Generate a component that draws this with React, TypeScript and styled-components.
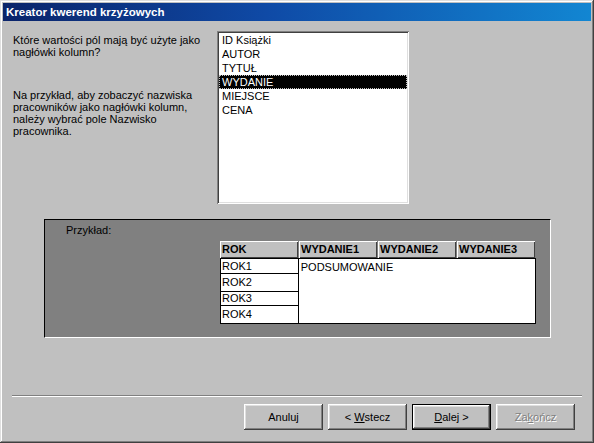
import styled, { createGlobalStyle } from "styled-components";

const GlobalStyle = createGlobalStyle`
  body {
    margin: 0;
    background: #c0c0c0;
    font-family: "Liberation Sans", Arial, sans-serif;
    font-size: 11px;
    color: #000;
  }
`;

const Window = styled.div`
  width: 594px;
  height: 443px;
  box-sizing: border-box;
  padding: 3px;
  background: #c0c0c0;
  box-shadow: inset -1px -1px #404040, inset 1px 1px #dfdfdf,
    inset -2px -2px #808080, inset 2px 2px #fff;
  display: flex;
  flex-direction: column;
`;

const TitleBar = styled.div`
  height: 18px;
  line-height: 18px;
  padding-left: 3px;
  background: linear-gradient(90deg, #0a246a 0%, #0f4aa6 45%, #1286d2 100%);
  color: #fff;
  font-weight: bold;
  font-size: 11.5px;
`;

const TopRow = styled.div`
  display: flex;
  align-items: flex-start;
  margin: 10px 0 0 10px;
`;

const Prompt = styled.div`
  width: 204px;
  padding-top: 3px;
  line-height: 12px;
`;

const Para = styled.p<{ $gap?: number }>`
  margin: ${(p) => p.$gap ?? 0}px 0 0 0;
`;

const ListBox = styled.div`
  width: 192px;
  height: 173px;
  box-sizing: border-box;
  padding: 2px;
  background: #fff;
  box-shadow: inset 1px 1px #808080, inset -1px -1px #fff,
    inset 2px 2px #404040, inset -2px -2px #dfdfdf;
`;

const ListItem = styled.div<{ $selected?: boolean }>`
  height: 14px;
  line-height: 14px;
  padding-left: 3px;
  white-space: nowrap;
  background: ${(p) => (p.$selected ? "#000" : "transparent")};
  color: ${(p) => (p.$selected ? "#fff" : "#000")};
  outline: ${(p) => (p.$selected ? "1px dotted #c0c0c0" : "none")};
  outline-offset: -1px;
`;

const ExamplePanel = styled.div`
  width: 507px;
  height: 119px;
  box-sizing: border-box;
  margin: 15px 0 0 41px;
  padding: 4px 0 0 21px;
  background: #808080;
  border: 1px solid;
  border-color: #000 #fff #fff #000;
`;

const PanelLabel = styled.div`
  line-height: 12px;
`;

const Grid = styled.div`
  margin: 5px 0 0 154px;
  width: 316px;
`;

const HeaderRow = styled.div`
  display: flex;
  gap: 1px;
`;

const HeaderCell = styled.div`
  width: 78px;
  height: 17px;
  box-sizing: border-box;
  line-height: 17px;
  padding-left: 2px;
  background: #c0c0c0;
  font-weight: bold;
  box-shadow: inset 1px 1px #fff, inset -1px -1px #404040;
`;

const GridBody = styled.div`
  display: flex;
`;

const RowLabels = styled.div`
  width: 79px;
  box-sizing: border-box;
  border: 1px solid #000;
  background: #fff;
`;

const RowLabel = styled.div<{ $h: number }>`
  height: ${(p) => p.$h}px;
  line-height: ${(p) => p.$h}px;
  padding-left: 1px;
  border-bottom: 1px solid #000;
  &:last-child {
    border-bottom: none;
  }
`;

const ValueArea = styled.div`
  width: 239px;
  height: 66px;
  box-sizing: border-box;
  margin-left: -1px;
  border: 1px solid #000;
  background: #fff;
  padding: 1px 0 0 2px;
  line-height: 14px;
`;

const Separator = styled.div`
  margin: 57px 9px 0 9px;
  border-top: 1px solid #808080;
  border-bottom: 1px solid #fff;
`;

const ButtonRow = styled.div`
  display: flex;
  justify-content: flex-end;
  gap: 5px;
  margin-top: 7px;
  padding-right: 16px;
`;

const Button = styled.div<{ $default?: boolean; $disabled?: boolean }>`
  width: 79px;
  height: 26px;
  box-sizing: border-box;
  display: flex;
  align-items: center;
  justify-content: center;
  background: #c0c0c0;
  color: ${(p) => (p.$disabled ? "#808080" : "#000")};
  text-shadow: ${(p) => (p.$disabled ? "1px 1px #fff" : "none")};
  box-shadow: ${(p) =>
    p.$default
      ? "inset 0 0 0 1px #000, inset -2px -2px #404040, inset 2px 2px #fff, inset -3px -3px #808080, inset 3px 3px #dfdfdf"
      : "inset -1px -1px #404040, inset 1px 1px #fff, inset -2px -2px #808080, inset 2px 2px #dfdfdf"};
`;

const Key = styled.span`
  text-decoration: underline;
`;

const fields = ["ID Książki", "AUTOR", "TYTUŁ", "WYDANIE", "MIEJSCE", "CENA"];
const rows = [
  { name: "ROK1", h: 14 },
  { name: "ROK2", h: 17 },
  { name: "ROK3", h: 13 },
  { name: "ROK4", h: 17 },
];

export default function App() {
  return (
    <>
      <GlobalStyle />
      <Window>
        <TitleBar>Kreator kwerend krzyżowych</TitleBar>
        <TopRow>
          <Prompt>
            <Para>
              Które wartości pól mają być użyte jako
              <br />
              nagłówki kolumn?
            </Para>
            <Para $gap={31}>
              Na przykład, aby zobaczyć nazwiska
              <br />
              pracowników jako nagłówki kolumn,
              <br />
              należy wybrać pole Nazwisko
              <br />
              pracownika.
            </Para>
          </Prompt>
          <ListBox>
            {fields.map((f) => (
              <ListItem key={f} $selected={f === "WYDANIE"}>
                {f}
              </ListItem>
            ))}
          </ListBox>
        </TopRow>
        <ExamplePanel>
          <PanelLabel>Przykład:</PanelLabel>
          <Grid>
            <HeaderRow>
              <HeaderCell>ROK</HeaderCell>
              <HeaderCell>WYDANIE1</HeaderCell>
              <HeaderCell>WYDANIE2</HeaderCell>
              <HeaderCell>WYDANIE3</HeaderCell>
            </HeaderRow>
            <GridBody>
              <RowLabels>
                {rows.map((r) => (
                  <RowLabel key={r.name} $h={r.h}>
                    {r.name}
                  </RowLabel>
                ))}
              </RowLabels>
              <ValueArea>PODSUMOWANIE</ValueArea>
            </GridBody>
          </Grid>
        </ExamplePanel>
        <Separator />
        <ButtonRow>
          <Button>Anuluj</Button>
          <Button>
            &lt;&nbsp;<Key>W</Key>stecz
          </Button>
          <Button $default>
            <Key>D</Key>alej &gt;
          </Button>
          <Button $disabled>
            Za<Key>k</Key>ończ
          </Button>
        </ButtonRow>
      </Window>
    </>
  );
}
